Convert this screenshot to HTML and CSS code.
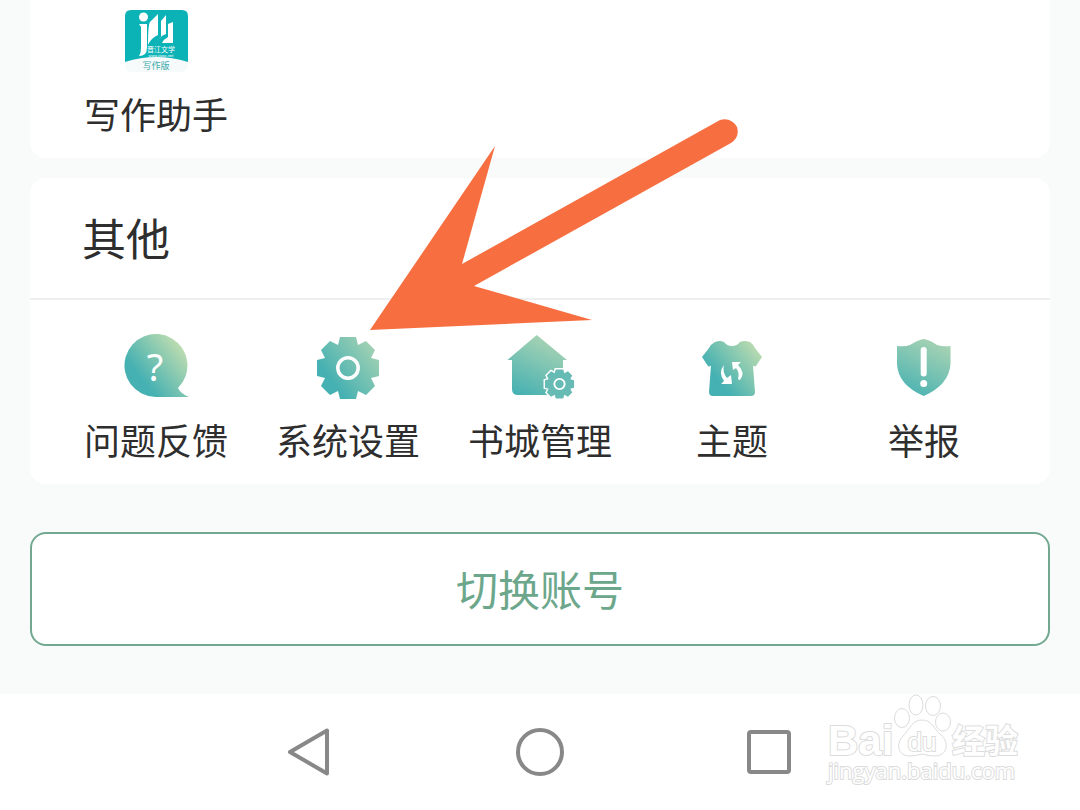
FILE: index.html
```html
<!DOCTYPE html>
<html lang="zh-CN">
<head>
<meta charset="utf-8">
<meta name="viewport" content="width=device-width, initial-scale=1">
<title>其他</title>
<link rel="stylesheet" href="styles.css">
</head>

<body>

<main class="main">
	<section class="card card-top">
		<div class="grid">
			<a class="item" href="#">
				<svg class="icon" viewBox="0 0 74 74">
					<rect x="6" y="6" width="63" height="62" rx="7" fill="#f7fafa"/>
					<path d="M6 58V12q0-6 6-6h51q6 0 6 6v46Q37 48 6 58z" fill="#0bb2b6"/>
					<circle cx="24.500" cy="13" r="4.500" fill="#fff"/>
					<path d="M20 20h8v24q0 8-8 8q2-3 2-8V23zM29 41q0-20 2-23l8-8v21q-7 3-10 10zM36 40q2-5 6-7V17l5-6v19q-8 3-11 10zM43 39q2-4 6-6V20l5-2v21z" fill="#fff"/>
					<text class="logo-name" x="42" y="48">晋江文学</text>
					<text class="logo-url" x="42" y="53">www.jjwxc.net</text>
					<text class="logo-ver" x="37" y="65">写作版</text>
				</svg>
				<span>写作助手</span>
			</a>
		</div>
	</section>

	<section class="card">
		<h2>其他</h2>
		<div class="grid">
			<a class="item" href="#">
				<svg class="icon" viewBox="0 0 74 74">
					<defs>
						<linearGradient id="green" gradientUnits="userSpaceOnUse" x1="22" y1="48" x2="62" y2="16">
							<stop offset="0" stop-color="#46b1b2"/>
							<stop offset="1" stop-color="#bcdcb0"/>
						</linearGradient>
						<linearGradient id="light" gradientUnits="userSpaceOnUse" x1="18" y1="66" x2="46" y2="8">
							<stop offset="0" stop-color="#46b1b2"/>
							<stop offset="1" stop-color="#a8d3b3"/>
						</linearGradient>
						<path id="gear" d="M-8-31H8L10-23 18-27 27-18 23-10 31-8V8L23 10 27 18 18 27 10 23 8 31H-8L-10 23-18 27-27 18-23 10-31 8V-8L-23-10-27-18-18-27-10-23z"/>
					</defs>
					<path d="M36.500 67A31.500 31.500 0 1 1 59 58Q62 64 70 67z" fill="url(#green)"/>
					<text class="mark" x="36" y="51">?</text>
				</svg>
				<span>问题反馈</span>
			</a>
			<a class="item" href="#">
				<svg class="icon" viewBox="0 0 74 74">
					<linearGradient id="gear-fill" gradientUnits="userSpaceOnUse" x1="-16" y1="13" x2="30" y2="-22">
						<stop offset="0" stop-color="#46b1b2"/>
						<stop offset="1" stop-color="#a8d3b3"/>
					</linearGradient>
					<use href="#gear" transform="translate(37 38)" fill="url(#gear-fill)"/>
					<circle cx="37" cy="38" r="10.200" fill="none" stroke="#fff" stroke-width="3.500"/>
				</svg>
				<span>系统设置</span>
			</a>
			<a class="item" href="#">
				<svg class="icon" viewBox="0 0 74 74">
					<path d="M33.700 5L64 30H60V65H15Q9 65 9 59V30H4.500z" fill="url(#light)"/>
					<g transform="translate(56.500 54) scale(.47)">
						<use href="#gear" fill="#66bbb4" stroke="#fff" stroke-width="6"/>
						<use href="#gear" fill="#66bbb4"/>
						<circle r="11" fill="none" stroke="#fff" stroke-width="4"/>
					</g>
				</svg>
				<span>书城管理</span>
			</a>
			<a class="item" href="#">
				<svg class="icon" viewBox="0 0 74 74">
					<path d="M20 12Q25 10 29 12Q32 16 37 16T45 12Q49 10 55 12Q58 14 60 18L67 27 61 36Q60 37 58 35.500L60 62Q60 66 56 66H18Q14 66 14 62L16 35.500Q14 37 13 36L7 27 14 18Q16 14 20 12z" fill="url(#green)"/>
					<path d="M29 35Q27 42 32 48L36 45 37 54H26L29 51Q23 42 29 35zM37 32H46L43 35Q51 43 45 50Q44 50 43 49Q45 43 41 38L38 40z" fill="#fff"/>
				</svg>
				<span>主题</span>
			</a>
			<a class="item" href="#">
				<svg class="icon" viewBox="0 0 74 74">
					<path d="M36.700 9Q43 10 50 15Q56 17 63.500 16V34Q62 55 36.700 66Q11 55 10 34V16Q18 17 23 15Q31 10 36.700 9z" fill="url(#light)"/>
					<path d="M36.700 20V43.500" fill="none" stroke="#fff" stroke-width="6" stroke-linecap="round"/>
					<circle cx="36.700" cy="53.500" r="3.500" fill="#fff"/>
				</svg>
				<span>举报</span>
			</a>
		</div>
	</section>

	<button class="switch" type="button">切换账号</button>
</main>

<nav class="nav">
	<button type="button" aria-label="返回">
		<svg viewBox="0 0 48 48"><path d="M4 24L41 2.500V45.500z"/></svg>
	</button>
	<button type="button" aria-label="主页">
		<svg viewBox="0 0 48 48"><circle cx="24" cy="24" r="22"/></svg>
	</button>
	<button type="button" aria-label="最近任务">
		<svg viewBox="0 0 48 48"><rect x="3" y="4" width="40" height="40" rx="2"/></svg>
	</button>
	<svg class="watermark" viewBox="0 0 200 100">
		<text class="bai" x="5" y="62">Bai</text>
		<ellipse cx="79" cy="25" rx="7.500" ry="9.500"/>
		<ellipse cx="93" cy="12" rx="7" ry="10"/>
		<ellipse cx="110" cy="13" rx="7.500" ry="9.500"/>
		<ellipse cx="120" cy="29" rx="7.500" ry="9"/>
		<path d="M99 27C109 27 110 35 118 42C127 50 124 63 112 63Q106 63 99 61Q92 63 87 63C74 63 73 50 80 43C87 36 89 27 99 27z"/>
		<text class="du" x="99" y="58">du</text>
		<text class="jy" x="129" y="60">经验</text>
		<text class="url" x="5" y="86">jingyan.baidu.com</text>
	</svg>
</nav>

<!-- 指向系统设置的箭头 -->
<svg class="arrow" viewBox="0 0 368 212" aria-hidden="true">
	<path d="M0 212L125 28 92 146 350 2Q361-1 367 9Q370 19 361 25L104 168 222 202z"/>
</svg>

</body>
</html>
```

FILE: styles.css
```css
* { box-sizing: border-box; padding: 0; margin: 0; }
a { color: inherit; text-decoration: none; }
button { font-family: inherit; cursor: pointer; }

body { min-height: 100vh; display: flex; flex-direction: column; position: relative; background: #f8fbfa; color: #2e2e2e; font-family: "Noto Sans CJK SC", sans-serif; }

.main { padding: 0 30px 48px; }

.card { margin-bottom: 20px; background: #fff; border-radius: 16px; }
.card h2 { height: 122px; padding-left: 52px; border-bottom: 2px solid #eeeff0; line-height: 118px; font-size: 44px; font-weight: normal; }

.grid { display: grid; grid-template-columns: repeat(5, 1fr); padding: 30px 30px 20px; }
.card-top { border-radius: 0 0 16px 16px; }
.card-top .grid { padding-top: 4px; }

.item { display: flex; flex-direction: column; align-items: center; gap: 10px; line-height: 50px; font-size: 36px; white-space: nowrap; }
.icon { width: 74px; height: 74px; }
.icon text { fill: #fff; text-anchor: middle; }
.icon .mark { font-family: "Noto Sans", sans-serif; font-size: 38px; }
.icon .logo-name { font-size: 7px; stroke: #0bb2b6; stroke-width: 1px; paint-order: stroke; }
.icon .logo-url { font-family: "Liberation Sans", sans-serif; font-size: 4px; }
.icon .logo-ver { fill: #3aa9ac; font-size: 9px; }

.switch { display: block; width: 100%; height: 114px; margin-top: 48px; padding-bottom: 4px; background: #fff; border: 2px solid #73a890; border-radius: 16px; color: #6ca78c; font-size: 42px; }

.nav { display: flex; justify-content: center; align-items: center; gap: 182px; position: relative; height: 116px; margin-top: auto; background: #fff; }
.nav button { width: 48px; height: 48px; background: none; border: none; }
.nav button svg { display: block; fill: none; stroke: #888; stroke-width: 4px; stroke-linejoin: round; }

.watermark { position: absolute; right: 57px; bottom: 17px; width: 200px; height: 100px; fill: #fff; stroke: #dcdcdc; stroke-width: 1px; }
.watermark text { stroke-width: 2px; paint-order: stroke; }
.watermark .bai { font-family: "Liberation Sans", sans-serif; font-size: 42px; font-weight: bold; }
.watermark .du { font-family: "Liberation Sans", sans-serif; font-size: 26px; text-anchor: middle; }
.watermark .jy { font-size: 33px; font-weight: bold; }
.watermark .url { font-family: "Open Sans", sans-serif; font-size: 22px; }

.arrow { position: absolute; top: 118px; left: 370px; width: 368px; height: 212px; overflow: visible; fill: #f76f40; pointer-events: none; }
```
